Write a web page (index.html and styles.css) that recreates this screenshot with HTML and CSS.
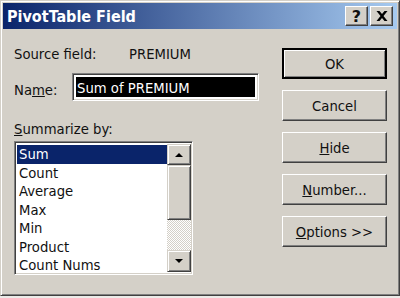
FILE: index.html
```html
<!DOCTYPE html>
<html lang="en">
<head>
    <meta charset="UTF-8">
    <title>PivotTable Field</title>
    <link rel="stylesheet" href="styles.css">
</head>
<body>
<div class="window">
    <div class="titlebar">
        <span class="title">PivotTable Field</span>
        <div class="caption-btns">
            <span class="cap-btn help">?</span>
            <span class="cap-btn close">
                <svg width="12" height="10" viewBox="0 0 12 10"><path d="M0.5 0h3l2.5 3L8.5 0h3l-4 5 4 5h-3L6 7 3.5 10h-3l4-5z" fill="#000"/></svg>
            </span>
        </div>
    </div>
    <div class="content">
        <div class="left">
            <div class="row source">
                <span class="label">Source field:</span>
                <span>PREMIUM</span>
            </div>
            <div class="row name">
                <span class="label short">Na<u>m</u>e:</span>
                <div class="textbox"><span class="sel">Sum of PREMIUM</span></div>
            </div>
            <div class="summ"><u>S</u>ummarize by:</div>
            <div class="listbox">
                <ul class="items">
                    <li class="current">Sum</li>
                    <li>Count</li>
                    <li>Average</li>
                    <li>Max</li>
                    <li>Min</li>
                    <li>Product</li>
                    <li>Count Nums</li>
                </ul>
                <div class="scrollbar">
                    <div class="sb-btn"><i class="arrow up"></i></div>
                    <div class="thumb"></div>
                    <div class="track"></div>
                    <div class="sb-btn down-btn"><i class="arrow down"></i></div>
                </div>
            </div>
        </div>
        <div class="buttons">
            <div class="btn default"><span>OK</span></div>
            <div class="btn"><span>Cancel</span></div>
            <div class="btn"><span><u>H</u>ide</span></div>
            <div class="btn"><span><u>N</u>umber...</span></div>
            <div class="btn"><span><u>O</u>ptions &gt;&gt;</span></div>
        </div>
    </div>
</div>
</body>
</html>
```
FILE: styles.css
```css
body, div, ul, li {
    margin: 0;
    padding: 0;
    list-style: none;
}

body {
    background: #ecebe8;
    font-family: "DejaVu Sans Condensed", "DejaVu Sans", sans-serif;
    font-size: 14.7px;
    color: #111;
}

u {
    text-decoration: underline;
    text-underline-offset: 1px;
}

.window {
    box-sizing: border-box;
    width: 400px;
    height: 296px;
    padding: 2px;
    background: #d4d0c8;
    border: 1px solid;
    border-color: #d4d0c8 #404040 #404040 #d4d0c8;
    box-shadow: inset 1px 1px #fff, inset -1px -1px #808080;
}

.titlebar {
    height: 26px;
    display: flex;
    align-items: center;
    justify-content: space-between;
    padding: 0 4px 0 4px;
    background: linear-gradient(to right, #0a246a, #a6caf0);
}

.title {
    color: #fff;
    font-weight: bold;
    font-size: 16px;
}

.caption-btns {
    display: flex;
    gap: 2px;
}

.cap-btn {
    box-sizing: border-box;
    width: 23px;
    height: 20px;
    display: flex;
    align-items: center;
    justify-content: center;
    background: #d4d0c8;
    border: 1px solid;
    border-color: #fff #404040 #404040 #fff;
    box-shadow: inset -1px -1px #808080;
    font-weight: bold;
    font-size: 16px;
    font-family: "DejaVu Sans", sans-serif;
}

.content {
    display: flex;
    justify-content: space-between;
    padding: 0 10px 0 11px;
}

.left {
    padding-top: 16px;
}

.row {
    display: flex;
    align-items: center;
    line-height: 18px;
}

.label {
    width: 115px;
}

.label.short {
    width: 58px;
    padding-top: 6px;
}

.name {
    margin-top: 10px;
}

.textbox {
    box-sizing: border-box;
    width: 187px;
    height: 28px;
    padding: 3px 3px;
    background: #fff;
    border: 1px solid;
    border-color: #808080 #fff #fff #808080;
    box-shadow: inset 1px 1px #404040, inset -1px -1px #d4d0c8;
}

.sel {
    display: block;
    height: 20px;
    line-height: 22px;
    padding-left: 1px;
    background: #000;
    color: #fff;
    overflow: hidden;
}

.summ {
    margin-top: 19px;
    line-height: 18px;
}

.listbox {
    box-sizing: border-box;
    display: flex;
    width: 179px;
    height: 134px;
    margin-top: 3px;
    padding: 2px 1px 2px 2px;
    background: #fff;
    border: 1px solid;
    border-color: #808080 #fff #fff #808080;
    box-shadow: inset 1px 1px #404040, inset -1px -1px #d4d0c8;
}

.items {
    flex: 1;
    padding-top: 1px;
}

.items li {
    height: 18.5px;
    line-height: 18.5px;
    padding-left: 2px;
}

.items li.current {
    background: #0a246a;
    color: #fff;
}

.scrollbar {
    width: 24px;
    display: flex;
    flex-direction: column;
}

.sb-btn, .thumb {
    box-sizing: border-box;
    background: #d4d0c8;
    border: 1px solid;
    border-color: #d4d0c8 #404040 #404040 #d4d0c8;
    box-shadow: inset 1px 1px #fff, inset -1px -1px #808080;
}

.sb-btn {
    height: 21px;
    display: flex;
    align-items: center;
    justify-content: center;
}

.down-btn {
    height: 22px;
}

.thumb {
    height: 55px;
}

.track {
    flex: 1;
    background: repeating-conic-gradient(#d4d0c8 0 25%, #fff 0 50%) 0 0 / 2px 2px;
}

.arrow {
    width: 0;
    height: 0;
    border-left: 4px solid transparent;
    border-right: 4px solid transparent;
}

.arrow.up {
    border-bottom: 4px solid #000;
}

.arrow.down {
    border-top: 4px solid #000;
}

.buttons {
    padding-top: 19px;
    display: flex;
    flex-direction: column;
    gap: 11px;
}

.btn {
    box-sizing: border-box;
    width: 105px;
    height: 31px;
    display: flex;
    align-items: center;
    justify-content: center;
    background: #d4d0c8;
    border: 1px solid;
    border-color: #fff #404040 #404040 #fff;
    box-shadow: inset -1px -1px #808080, inset 1px 1px #d4d0c8;
}

.btn.default {
    border: 2px solid #000;
    box-shadow: inset 1px 1px #fff, inset -1px -1px #808080;
}
```
